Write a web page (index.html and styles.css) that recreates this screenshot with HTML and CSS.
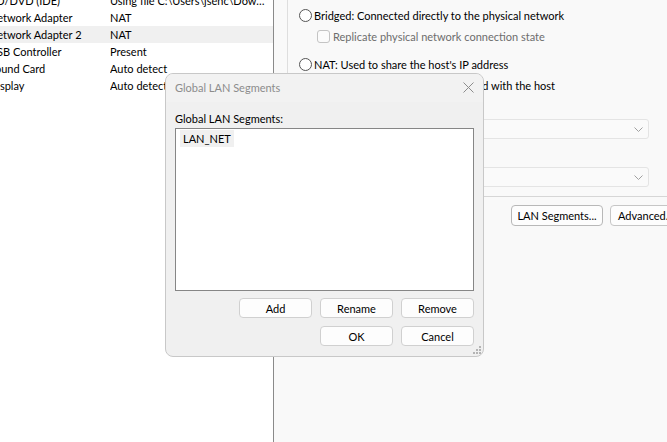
FILE: index.html
```html
<!DOCTYPE html>
<html>
<head>
	<meta charset="utf-8">
	<title>Network Adapter 2</title>
	<link rel="stylesheet" href="styles.css">
</head>
<body>
<div class="vm">
	<div class="devices">
		<div class="device-list">
			<div class="device"><span class="dev-name">CD/DVD (IDE)</span><span class="dev-summary">Using file C:\Users\jsehc\Dow…</span></div>
			<div class="device"><span class="dev-name">Network Adapter</span><span class="dev-summary">NAT</span></div>
			<div class="device selected"><span class="dev-name">Network Adapter 2</span><span class="dev-summary">NAT</span></div>
			<div class="device"><span class="dev-name">USB Controller</span><span class="dev-summary">Present</span></div>
			<div class="device"><span class="dev-name">Sound Card</span><span class="dev-summary">Auto detect</span></div>
			<div class="device"><span class="dev-name">Display</span><span class="dev-summary">Auto detect</span></div>
		</div>
	</div>

	<div class="settings">
		<div class="conn-group">
			<div class="opt"><span class="radio"></span>Bridged: Connected directly to the physical network</div>
			<div class="opt sub disabled"><span class="check"></span>Replicate physical network connection state</div>
			<div class="opt gap"><span class="radio"></span>NAT: Used to share the host's IP address</div>
			<div class="opt"><span class="radio"></span>Host-only: A private network shared with the host</div>
			<div class="opt"><span class="radio"></span>Custom: Specific virtual network</div>
			<div class="combo">
				<svg width="9" height="5" viewBox="0 0 9 5"><path d="M0.5 0.5 L4.5 4.5 L8.5 0.5" fill="none" stroke="#a0a0a0"/></svg>
			</div>
			<div class="opt"><span class="radio"></span>LAN segment:</div>
			<div class="combo combo-lan">
				<svg width="9" height="5" viewBox="0 0 9 5"><path d="M0.5 0.5 L4.5 4.5 L8.5 0.5" fill="none" stroke="#a0a0a0"/></svg>
			</div>
		</div>
		<div class="net-buttons">
			<button class="btn btn-lan">LAN Segments...</button>
			<button class="btn btn-adv">Advanced...</button>
		</div>
	</div>
</div>

<div class="dialog">
	<div class="dialog-title">
		<span>Global LAN Segments</span>
		<svg class="close" width="11" height="11" viewBox="0 0 11 11"><path d="M0.5 0.5 L10.5 10.5 M10.5 0.5 L0.5 10.5" stroke="#8c8c8c" stroke-width="1"/></svg>
	</div>
	<div class="dialog-body">
		<div class="field-label">Global LAN Segments:</div>
		<div class="listbox">
			<div class="list-item">LAN_NET</div>
		</div>
		<div class="dialog-row">
			<button class="btn dbtn">Add</button>
			<button class="btn dbtn">Rename</button>
			<button class="btn dbtn">Remove</button>
		</div>
		<div class="dialog-row">
			<button class="btn dbtn">OK</button>
			<button class="btn dbtn">Cancel</button>
		</div>
	</div>
	<svg class="grip" width="8" height="8" viewBox="0 0 8 8">
		<rect x="6" y="0" width="2" height="2" fill="#b4b4b4"/>
		<rect x="3" y="3" width="2" height="2" fill="#b4b4b4"/>
		<rect x="6" y="3" width="2" height="2" fill="#b4b4b4"/>
		<rect x="0" y="6" width="2" height="2" fill="#b4b4b4"/>
		<rect x="3" y="6" width="2" height="2" fill="#b4b4b4"/>
		<rect x="6" y="6" width="2" height="2" fill="#b4b4b4"/>
	</svg>
</div>
</body>
</html>
```

FILE: styles.css
```css
* {
	box-sizing: border-box;
}

body {
	margin: 0;
	width: 667px;
	height: 442px;
	overflow: hidden;
	background: #f9f9f9;
	font-family: Lato, "Noto Sans", sans-serif;
	font-size: 11px;
	color: #000;
}

.vm {
	display: flex;
	height: 442px;
}

/* device list on the left */
.devices {
	width: 274px;
	flex: none;
	background: #fff;
	border-right: 1px solid #8a8a8a;
	overflow: hidden;
}

.device-list {
	margin-top: -8px;
}

.device {
	display: flex;
	align-items: center;
	height: 17px;
	white-space: nowrap;
}

.device.selected {
	background: #f0f0f0;
}

.dev-name {
	flex: none;
	width: 121px;
	margin-left: -11px;
}

.dev-summary {
	flex: 1;
	overflow: hidden;
	padding-right: 8px;
}

/* connection settings */
.settings {
	flex: 1;
	overflow: hidden;
	background: #f9f9f9;
}

.conn-group {
	margin: -11px -40px 0 13px;
	padding: 15px 0 9px 11px;
	border: 1px solid #dedede;
	border-bottom-color: #d6d6d6;
}

.opt {
	display: flex;
	align-items: center;
	height: 20px;
	margin-bottom: 1px;
	white-space: nowrap;
}

.opt.gap {
	margin-top: 8px;
}

.opt.sub {
	padding-left: 18px;
}

.opt.disabled {
	color: #6d6d6d;
}

.radio {
	width: 13px;
	height: 13px;
	margin-right: 2px;
	border: 1px solid #555;
	border-radius: 50%;
	background: #fff;
}

.check {
	width: 13px;
	height: 13px;
	margin-right: 3px;
	border: 1px solid #c4c4c4;
	border-radius: 3px;
	background: #fbfbfb;
}

.combo {
	display: flex;
	align-items: center;
	justify-content: flex-end;
	width: 332px;
	height: 20px;
	margin: 3px 0 4px 18px;
	padding-right: 5px;
	border: 1px solid #e4e4e4;
	border-radius: 3px;
	background: #fafafa;
}

.combo-lan {
	margin-top: 4px;
	margin-bottom: 0;
}

.net-buttons {
	display: flex;
	gap: 7px;
	margin-top: 8px;
	padding-left: 237px;
	white-space: nowrap;
}

.btn {
	flex: none;
	height: 21px;
	padding: 0;
	font-family: inherit;
	font-size: 11px;
	color: #000;
	background: #fdfdfd;
	border: 1px solid #d0d0d0;
	border-radius: 4px;
}

.btn-lan {
	width: 92px;
	border-color: #b8b8b8;
}

.btn-adv {
	width: 78px;
	text-align: left;
	padding-left: 7px;
	border-color: #c6c6c6;
}

/* Global LAN Segments dialog */
.dialog {
	position: absolute;
	left: 165px;
	top: 73px;
	width: 319px;
	height: 284px;
	background: #f0f0f0;
	border: 1px solid #c8c8c8;
	border-radius: 8px;
	overflow: hidden;
}

.dialog-title {
	display: flex;
	align-items: center;
	justify-content: space-between;
	height: 28px;
	padding: 0 9px 1px 9px;
	background: #f2f2f2;
	color: #8c8c8c;
}

.dialog-body {
	padding: 0 9px;
}

.field-label {
	height: 16px;
	line-height: 16px;
	margin-top: 9px;
	margin-bottom: 1px;
}

.listbox {
	height: 163px;
	padding: 1px 0 0 4px;
	background: #fff;
	border: 1px solid #868686;
}

.list-item {
	display: inline-block;
	height: 17px;
	line-height: 17px;
	padding: 0 3px;
	background: #f0f0f0;
}

.dialog-row {
	display: flex;
	justify-content: flex-end;
	gap: 8px;
	margin-top: 7px;
}

.dialog-row + .dialog-row {
	margin-top: 8px;
}

.dbtn {
	width: 73px;
	height: 20px;
}

.grip {
	position: absolute;
	right: 2px;
	bottom: 2px;
}
```
